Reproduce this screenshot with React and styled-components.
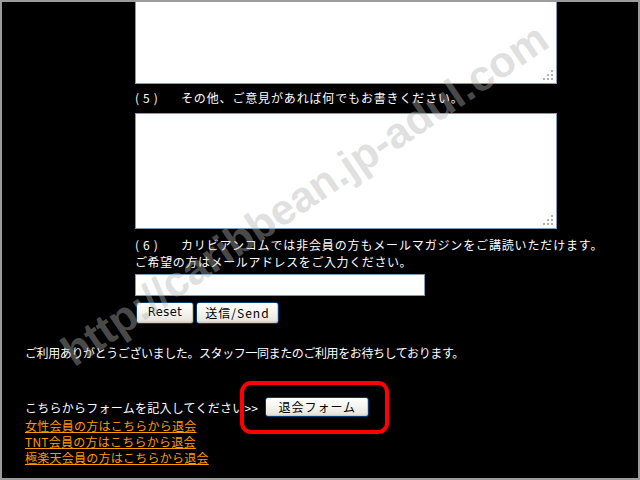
import React from "react";
import styled, { createGlobalStyle } from "styled-components";

const Global = createGlobalStyle`
  html, body { margin: 0; padding: 0; background: #000; overflow: hidden; }
  * { box-sizing: border-box; }
`;

const Frame = styled.div`
  position: relative;
  width: 640px;
  height: 480px;
  border: 2px solid #9c9c9c;
  background: #000;
  overflow: hidden;
  color: #fff;
  font-family: "Noto Sans CJK JP", "Liberation Sans", sans-serif;
  font-size: 12px;
  letter-spacing: 0.25px;
`;

const Form = styled.div`
  padding-left: 133px;
  width: 600px;
`;

const AreaWrap = styled.div`
  position: relative;
  width: 422px;
  height: ${(p) => p.$h}px;
`;

const Area = styled.textarea`
  display: block;
  width: 100%;
  height: 100%;
  margin: 0;
  resize: none;
  background: #fff;
  border: 1px solid #7f9db9;
  border-top: ${(p) => (p.$cut ? "none" : "1px solid #7f9db9")};
  outline: none;
`;

const Grip = styled.svg`
  position: absolute;
  right: 4px;
  bottom: 4px;
  width: 10px;
  height: 10px;
`;

const Question = styled.div`
  margin: ${(p) => p.$mt}px 0 ${(p) => p.$mb}px;
  line-height: ${(p) => p.$lh}px;
  white-space: nowrap;
`;

const Line = styled.div`
  letter-spacing: ${(p) => p.$ls}px;
`;

const Num = styled.span`
  display: inline-block;
  width: 46px;
  letter-spacing: 4px;
`;

const EmailInput = styled.input`
  display: block;
  width: 290px;
  height: 22px;
  margin: 4px 0 0;
  border: 1px solid #7f9db9;
  background: #fff;
  outline: none;
`;

const ButtonRow = styled.div`
  display: flex;
  gap: 2px;
  margin: 6px 0 0 1px;
`;

const XPButton = styled.button`
  width: ${(p) => p.$w}px;
  height: ${(p) => p.$h}px;
  padding: 0;
  border: 1px solid #003c74;
  border-radius: 3px;
  background: linear-gradient(#ffffff 0%, #f6f5f1 45%, #e9e7df 85%, #d8d4c8 100%);
  box-shadow: inset -1px -1px 0 #cdc9bd;
  color: #000;
  font-family: ${(p) =>
    p.$jp ? '"Noto Sans CJK JP", sans-serif' : '"DejaVu Sans", "Noto Sans CJK JP", sans-serif'};
  font-size: ${(p) => (p.$jp ? 12 : 11.5)}px;
  letter-spacing: ${(p) => (p.$jp ? 1 : 0.5)}px;
  line-height: 1;
`;

const Footer = styled.div`
  padding-left: 23px;
`;

const Thanks = styled.div`
  margin-top: 20px;
  line-height: 18px;
  white-space: nowrap;
  letter-spacing: -0.4px;
`;

const WithdrawRow = styled.div`
  display: flex;
  align-items: center;
  gap: 7px;
  margin-top: 35px;
  height: 20px;
`;

const Links = styled.div`
  display: flex;
  flex-direction: column;
  align-items: flex-start;
  margin-top: 0.5px;
`;

const OrangeLink = styled.a`
  color: #ff9900;
  text-decoration: underline;
  line-height: 16.3px;
  white-space: nowrap;
`;

const Highlight = styled.div`
  position: absolute;
  left: 238px;
  top: 379px;
  width: 149px;
  height: 53px;
  border: 4px solid #f00;
  border-radius: 11px;
  pointer-events: none;
`;

const Watermark = styled.div`
  position: absolute;
  left: 52px;
  top: 336px;
  transform-origin: 0 0;
  transform: rotate(-34deg);
  font-family: "Liberation Sans", Arial, sans-serif;
  font-weight: bold;
  font-size: 43px;
  line-height: 1;
  letter-spacing: 0;
  color: rgba(180, 180, 180, 0.42);
  white-space: nowrap;
  pointer-events: none;
`;

function ResizeGrip() {
  const dots = [
    [8, 0],
    [4, 4],
    [8, 4],
    [0, 8],
    [4, 8],
    [8, 8],
  ];
  return (
    <Grip viewBox="0 0 10 10">
      {dots.map(([x, y], i) => (
        <rect key={i} x={x} y={y} width="2" height="2" fill="#b4b0a8" />
      ))}
    </Grip>
  );
}

export default function App() {
  return (
    <>
      <Global />
      <Frame>
        <Form>
          <AreaWrap $h={82}>
            <Area $cut />
            <ResizeGrip />
          </AreaWrap>
          <Question $mt={5} $mb={6} $lh={18}>
            <Line $ls={0.85}>
              <Num>(5)</Num>その他、ご意見があれば何でもお書きください。
            </Line>
          </Question>
          <AreaWrap $h={116}>
            <Area />
            <ResizeGrip />
          </AreaWrap>
          <Question $mt={7} $mb={0} $lh={17}>
            <Line $ls={0.85}>
              <Num>(6)</Num>カリビアンコムでは非会員の方もメールマガジンをご講読いただけます。
            </Line>
            <Line $ls={0.6}>ご希望の方はメールアドレスをご入力ください。</Line>
          </Question>
          <EmailInput type="text" />
          <ButtonRow>
            <XPButton $w={58} $h={22}>Reset</XPButton>
            <XPButton $w={83} $h={22} $jp>送信/Send</XPButton>
          </ButtonRow>
        </Form>
        <Footer>
          <Thanks>ご利用ありがとうございました。スタッフ一同またのご利用をお待ちしております。</Thanks>
          <WithdrawRow>
            <span>こちらからフォームを記入してください&gt;&gt;</span>
            <XPButton $w={104} $h={20} $jp>退会フォーム</XPButton>
          </WithdrawRow>
          <Links>
            <OrangeLink href="#">女性会員の方はこちらから退会</OrangeLink>
            <OrangeLink href="#">TNT会員の方はこちらから退会</OrangeLink>
            <OrangeLink href="#">極楽天会員の方はこちらから退会</OrangeLink>
          </Links>
        </Footer>
        <Highlight />
        <Watermark>http://caribbean.jp-adul.com</Watermark>
      </Frame>
    </>
  );
}
